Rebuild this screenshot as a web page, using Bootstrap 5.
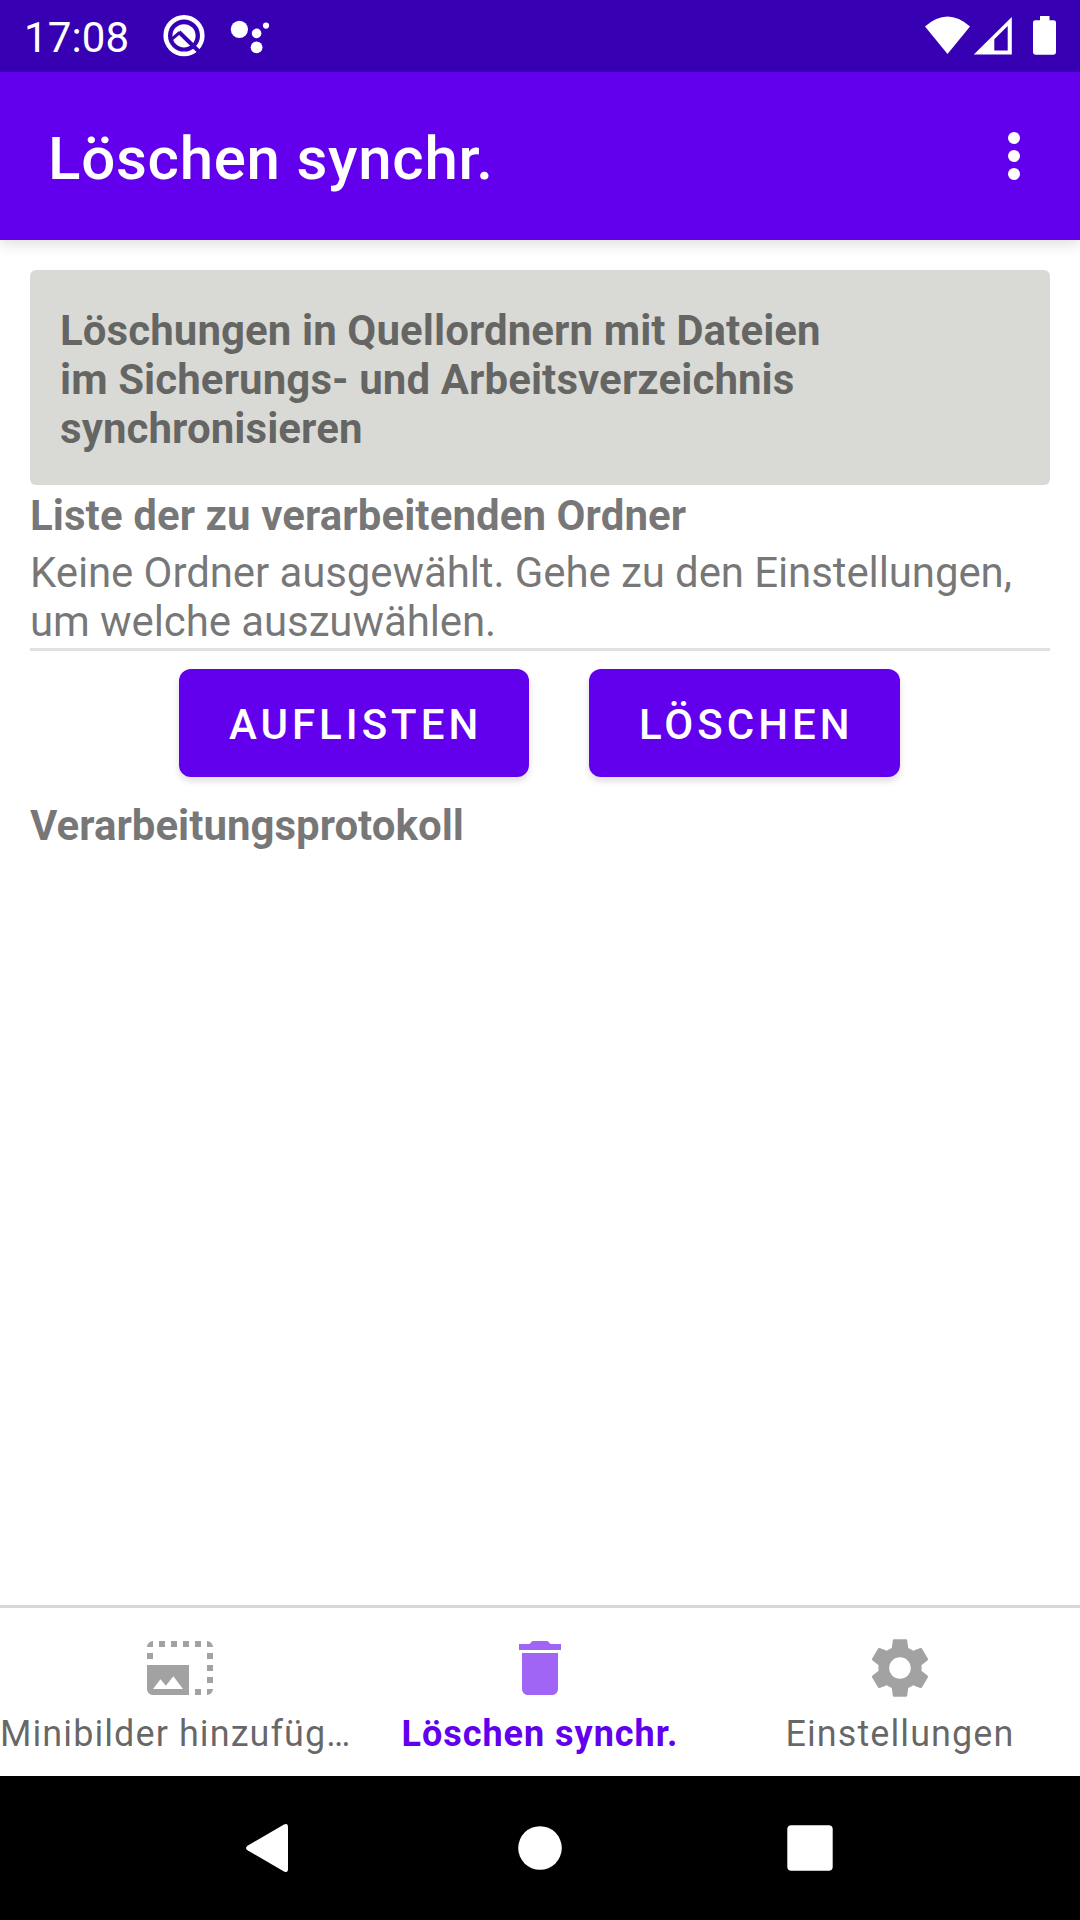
<!DOCTYPE html>
<html lang="de">
<head>
<meta charset="utf-8">
<meta name="viewport" content="width=device-width, initial-scale=1">
<title>Löschen synchr.</title>
<link href="https://cdn.jsdelivr.net/npm/bootstrap@5.3.0/dist/css/bootstrap.min.css" rel="stylesheet">
<style>
  body { font-family: Roboto, sans-serif; font-size: 42px; line-height: 49px; color: rgba(0,0,0,.54); background: #fff; }
  .screen { width: 1080px; height: 1920px; }
  .status-bar { height: 72px; background: #3700b3; padding: 0 24px; }
  .status-time { letter-spacing: .1px; padding-top: 3px; }
  .status-notes { width: 114px; height: 72px; margin-left: 31px; }
  .status-system { width: 135px; height: 72px; }
  .app-bar { height: 168px; background: #6200ee; padding: 0 48px; box-shadow: 0 5px 13px rgba(0,0,0,.12); z-index: 1; }
  .app-title { font-size: 60px; font-weight: 500; line-height: 70px; letter-spacing: .75px; padding-top: 5px; }
  .app-menu { width: 36px; height: 72px; }
  .page-body { padding: 30px 30px 0; }
  .info-panel { height: 215px; padding: 36px 30px 0; border-radius: 6px; background: #d9dad5; letter-spacing: .08px; }
  .list-title { margin-top: 6px; letter-spacing: .07px; }
  .list-empty { padding: 8px 0 2px; border-bottom: 3px solid #e0e0e0; height: 111px; letter-spacing: -.1px; }
  .action-row { padding: 18px 1px 24px 0; gap: 60px; }
  .action-btn { height: 108px; padding: 2px 0 0 50px; border: 0; border-radius: 12px; background: #6200ee; color: #fff; font-size: 42px; font-weight: 500; letter-spacing: 4px; line-height: 49px; box-shadow: 0 4px 7px rgba(0,0,0,.14); text-align: left; }
  .action-btn:hover { background: #6200ee; color: #fff; }
  .btn-list { width: 350px; }
  .btn-delete { width: 311px; }
  .tab-bar { height: 171px; border-top: 3px solid #d8d8d8; font-size: 36px; line-height: 42px; letter-spacing: 1.08px; }
  .tab-item { padding-top: 24px; color: rgba(0,0,0,.6); gap: 9px; }
  .tab-item.active { color: #6200ee; letter-spacing: .97px; }
  .tab-item svg { width: 72px; height: 72px; opacity: .6; }
  .system-nav { height: 144px; }
</style>
</head>
<body>
<div class="screen d-flex flex-column overflow-hidden">
  <header class="status-bar d-flex align-items-center text-white flex-shrink-0">
    <span class="status-time">17:08</span>
    <svg class="status-notes" viewBox="160 0 114 72" fill="#fff">
      <circle cx="184" cy="35.6" r="18.3" fill="none" stroke="#fff" stroke-width="4.6"/>
      <circle cx="184" cy="35.8" r="11.6"/>
      <path d="M179 32 201 53.500" fill="none" stroke="#3700b3" stroke-width="4"/>
      <path d="M171 39.800 179.600 32.500" fill="none" stroke="#3700b3" stroke-width="3"/>
      <circle cx="239.4" cy="29.3" r="8.6"/><circle cx="256.6" cy="33.4" r="4.8"/><circle cx="266" cy="25.6" r="3.1"/><circle cx="256.6" cy="47.3" r="5.9"/>
    </svg>
    <svg class="status-system ms-auto" viewBox="921 0 135 72" fill="#fff">
      <path d="M925 26.5Q947.5 6.5 970 26.5L947.5 54Z"/>
      <path fill-rule="evenodd" d="M1011.8 17V54.6H973.8ZM1007.7 26 994.3 39.2V50.4H1007.7Z"/>
      <path d="M1040 16h9.5v4.2h4.1a2.4 2.4 0 0 1 2.4 2.4v29.7a2.4 2.4 0 0 1-2.4 2.4h-18.2a2.4 2.4 0 0 1-2.4-2.4V22.6a2.4 2.4 0 0 1 2.4-2.4h4.6z"/>
    </svg>
  </header>

  <nav class="app-bar d-flex align-items-center justify-content-between text-white position-relative flex-shrink-0">
    <h1 class="app-title m-0">Löschen synchr.</h1>
    <svg class="app-menu" viewBox="-6 -12 12 24" fill="#fff"><circle cy="-6" r="2"/><circle r="2"/><circle cy="6" r="2"/></svg>
  </nav>

  <main class="page-body flex-grow-1">
    <div class="info-panel fw-bold">Löschungen in Quellordnern mit Dateien<br>im Sicherungs- und Arbeitsverzeichnis<br>synchronisieren</div>
    <div class="list-title fw-bold">Liste der zu verarbeitenden Ordner</div>
    <div class="list-empty">Keine Ordner ausgewählt. Gehe zu den Einstellungen,<br>um welche auszuwählen.</div>
    <div class="action-row d-flex justify-content-center">
      <button type="button" class="btn action-btn btn-list">AUFLISTEN</button>
      <button type="button" class="btn action-btn btn-delete">LÖSCHEN</button>
    </div>
    <div class="fw-bold">Verarbeitungsprotokoll</div>
  </main>

  <nav class="tab-bar row g-0 flex-shrink-0">
    <div class="tab-item col-4 d-flex flex-column">
      <svg class="align-self-center" viewBox="0 0 24 24" fill="currentColor"><path d="M21 15h2v2h-2v-2zm0-4h2v2h-2v-2zm2 8h-2v2c1 0 2-1 2-2zM13 3h2v2h-2V3zm8 4h2v2h-2V7zm0-4v2h2c0-1-1-2-2-2zM1 7h2v2H1V7zm16-4h2v2h-2V3zm0 16h2v2h-2v-2zM3 3C2 3 1 4 1 5h2V3zm6 0h2v2H9V3zM5 3h2v2H5V3zm-4 8v8c0 1.100.9 2 2 2h12V11H1zm2 8l2.500-3.210 1.790 2.150 2.500-3.220L13 19H3z"/></svg>
      <span class="text-nowrap">Minibilder hinzufüg…</span>
    </div>
    <div class="tab-item active col-4 d-flex flex-column align-items-center">
      <svg viewBox="0 0 24 24" fill="currentColor"><path d="M6 19c0 1.100.9 2 2 2h8c1.100 0 2-.9 2-2V7H6v12zM19 4h-3.500l-1-1h-5l-1 1H5v2h14V4z"/></svg>
      <span class="fw-bold">Löschen synchr.</span>
    </div>
    <div class="tab-item col-4 d-flex flex-column align-items-center">
      <svg viewBox="0 0 24 24" fill="currentColor"><path d="M19.140 12.940c.04-.3.060-.61.060-.94 0-.32-.02-.64-.07-.94l2.030-1.580c.18-.14.230-.41.120-.61l-1.920-3.320c-.12-.22-.37-.29-.59-.22l-2.390.96c-.5-.38-1.030-.7-1.620-.94l-.36-2.540c-.04-.24-.24-.41-.48-.41h-3.840c-.24 0-.43.170-.47.410l-.36 2.540c-.59.240-1.130.570-1.620.94l-2.390-.96c-.22-.08-.47 0-.59.220L2.740 8.870c-.12.210-.08.470.120.610l2.030 1.580c-.05.300-.09.630-.09.940s.02.640.070.940l-2.030 1.580c-.18.140-.23.410-.12.610l1.920 3.320c.12.220.370.290.590.220l2.390-.96c.5.380 1.030.700 1.620.940l.36 2.540c.05.240.240.410.480.410h3.840c.24 0 .44-.17.470-.41l.36-2.540c.59-.24 1.130-.56 1.620-.94l2.390.96c.22.080.470 0 .59-.22l1.920-3.320c.12-.22.070-.47-.12-.61l-2.010-1.580zM12 15.600c-1.980 0-3.600-1.620-3.600-3.600s1.620-3.600 3.600-3.600 3.600 1.620 3.600 3.600-1.620 3.600-3.600 3.600z"/></svg>
      <span>Einstellungen</span>
    </div>
  </nav>

  <footer class="system-nav bg-black flex-shrink-0">
    <svg class="d-block w-100 h-100" viewBox="0 1776 1080 144" fill="#fff">
      <path d="M284 1824.500 247.500 1845.700Q244.500 1848 247.500 1850.300L284 1871.500Q288 1873.300 288 1869V1827Q288 1822.700 284 1824.500Z"/>
      <circle cx="540" cy="1848" r="21.800"/>
      <rect x="787.300" y="1825.300" width="45.400" height="45.400" rx="4"/>
    </svg>
  </footer>
</div>
<script src="https://cdn.jsdelivr.net/npm/bootstrap@5.3.0/dist/js/bootstrap.bundle.min.js"></script>
</body>
</html>
